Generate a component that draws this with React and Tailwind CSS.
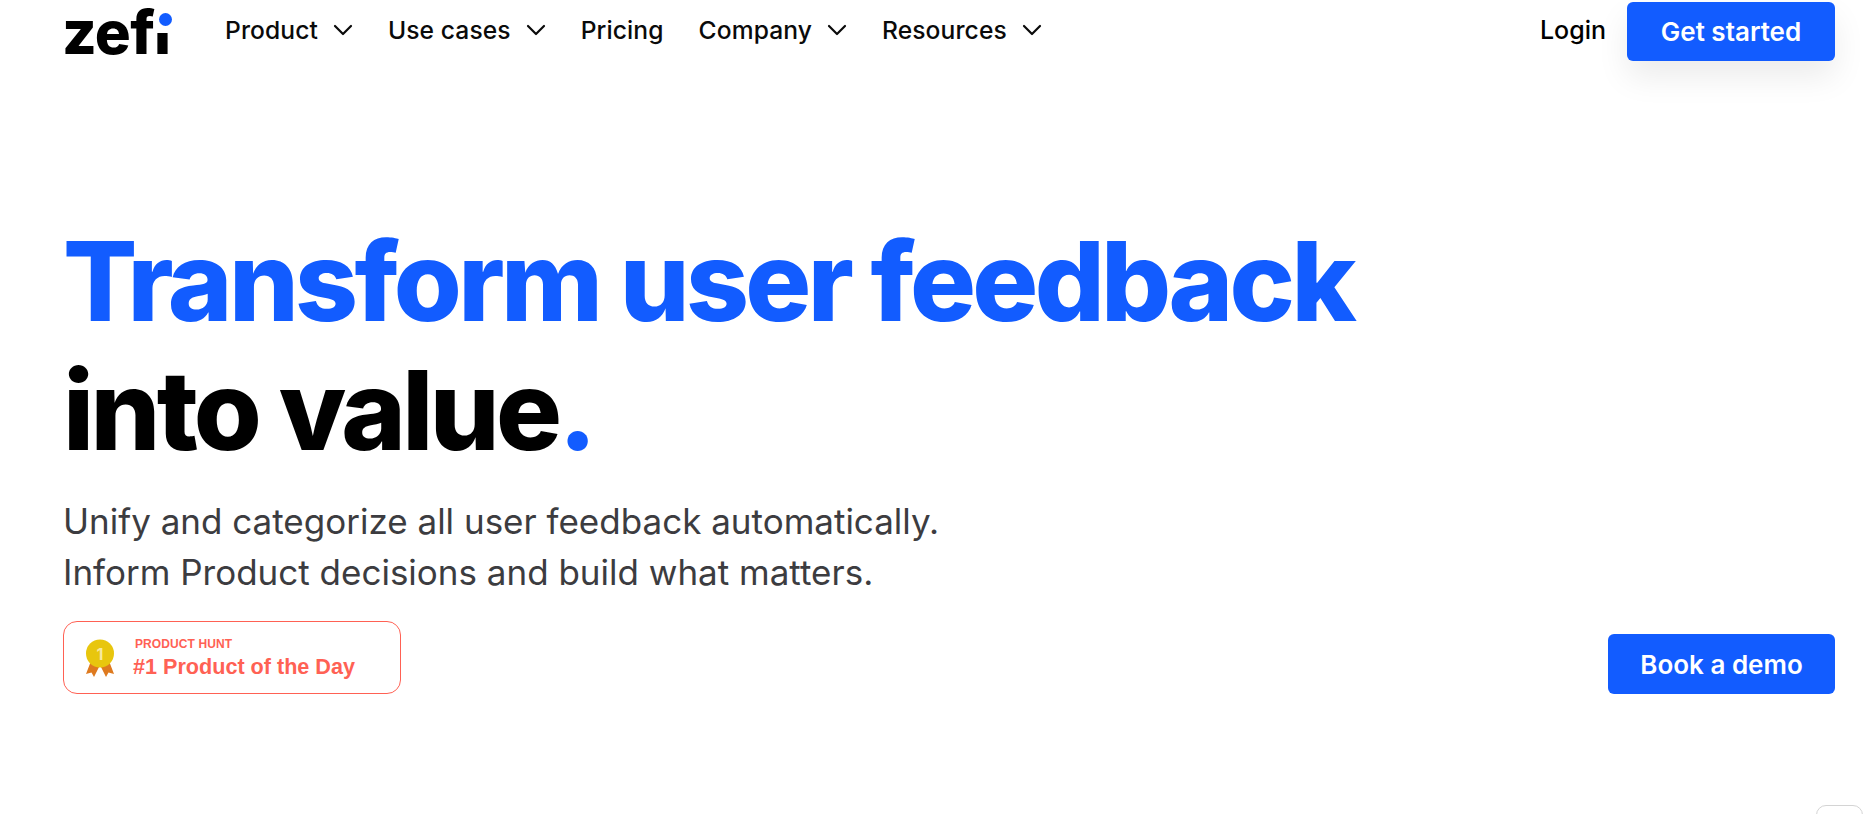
import React from "react";

const sans = "font-['Inter','Noto_Sans',sans-serif]";

function Chevron() {
  return (
    <svg width="20" height="12" viewBox="0 0 20 12" fill="none" stroke="#0a0a0a" strokeWidth="2.2" strokeLinecap="round" strokeLinejoin="round" className="shrink-0">
      <path d="M2 2l8 8 8-8" />
    </svg>
  );
}

function NavItem({ label, chevron }) {
  return (
    <a className="flex items-center gap-[15px] text-[24.6px] font-medium text-[#0a0a0a] leading-none tracking-[0.1px]">
      <span>{label}</span>
      {chevron && <Chevron />}
    </a>
  );
}

function Medal() {
  return (
    <svg width="30" height="38" viewBox="0 0 30 38" className="shrink-0">
      <path d="M6 22L1 35l5.5-1.5L9 38l6-12z" fill="#de7a1f" />
      <path d="M24 22l5 13-5.5-1.5L21 38l-6-12z" fill="#de7a1f" />
      <circle cx="15" cy="14.5" r="14" fill="#e8c60e" />
      <text x="15" y="20.5" textAnchor="middle" fontSize="16" fontWeight="700" fill="#f7e9a0" fontFamily="Inter, sans-serif">1</text>
    </svg>
  );
}

export default function App() {
  return (
    <div className={`w-full h-[814px] bg-white overflow-hidden relative ${sans}`}>
      <header className="flex items-center justify-between h-[60px] mt-px pl-[62px] pr-[35px]">
        <div className="flex items-center">
          <div className="relative w-[106px] h-[60px] mr-[57px]">
            <span className="block pt-[2px] text-[60px] font-extrabold text-black leading-[58px] tracking-[-0.7px] whitespace-nowrap">
              zef<span className="inline-block [clip-path:inset(30px_0_0_0)]">i</span>
            </span>
            <span className="absolute left-[97px] top-[12px] w-[13px] h-[13px] rounded-full bg-[#125cff]"></span>
          </div>
          <nav className="flex items-center gap-[35px] pb-[2px]">
            <NavItem label="Product" chevron />
            <NavItem label="Use cases" chevron />
            <NavItem label="Pricing" />
            <NavItem label="Company" chevron />
            <NavItem label="Resources" chevron />
          </nav>
        </div>
        <div className="flex items-center gap-[21px]">
          <a className="text-[25px] font-medium text-black leading-none pb-[2px]">Login</a>
          <button className="w-[208px] h-[59px] rounded-[6px] bg-[#125cff] text-white text-[26px] font-semibold shadow-[0_16px_32px_rgba(0,0,0,0.08)]">Get started</button>
        </div>
      </header>

      <main className="pl-[63px] pr-[35px]">
        <h1 className="mt-[156px] text-[110px] font-extrabold leading-[129px] tracking-[-3.7px] text-black whitespace-nowrap">
          <span className="block text-[#125cff]">Transform user feedback</span>
          <span className="block">into value<span className="text-[#125cff]">.</span></span>
        </h1>
        <p className="mt-[21px] text-[35px] leading-[51px] text-[#3c3c40]">
          Unify and categorize all user feedback automatically.
          <br />
          Inform Product decisions and build what matters.
        </p>
        <div className="flex items-end justify-between mt-[23px]">
          <div className="flex items-center w-[338px] h-[73px] rounded-[14px] border border-[#ff6154] pl-[21px] gap-[18px] bg-white">
            <Medal />
            <div className="flex flex-col font-['Liberation_Sans',Arial,sans-serif] text-[#ff6154]">
              <span className="pl-[2px] text-[12px] font-bold leading-[14px] tracking-[0.1px]">PRODUCT HUNT</span>
              <span className="mt-[4px] text-[21.6px] font-bold leading-[24px]">#1 Product of the Day</span>
            </div>
          </div>
          <button className="w-[227px] h-[60px] rounded-[6px] bg-[#125cff] text-white text-[26px] font-semibold">Book a demo</button>
        </div>
      </main>

      <div className="absolute left-[1816px] top-[805px] w-[47px] h-[20px] rounded-[10px] border border-[#d4d4d4] bg-white"></div>
    </div>
  );
}
